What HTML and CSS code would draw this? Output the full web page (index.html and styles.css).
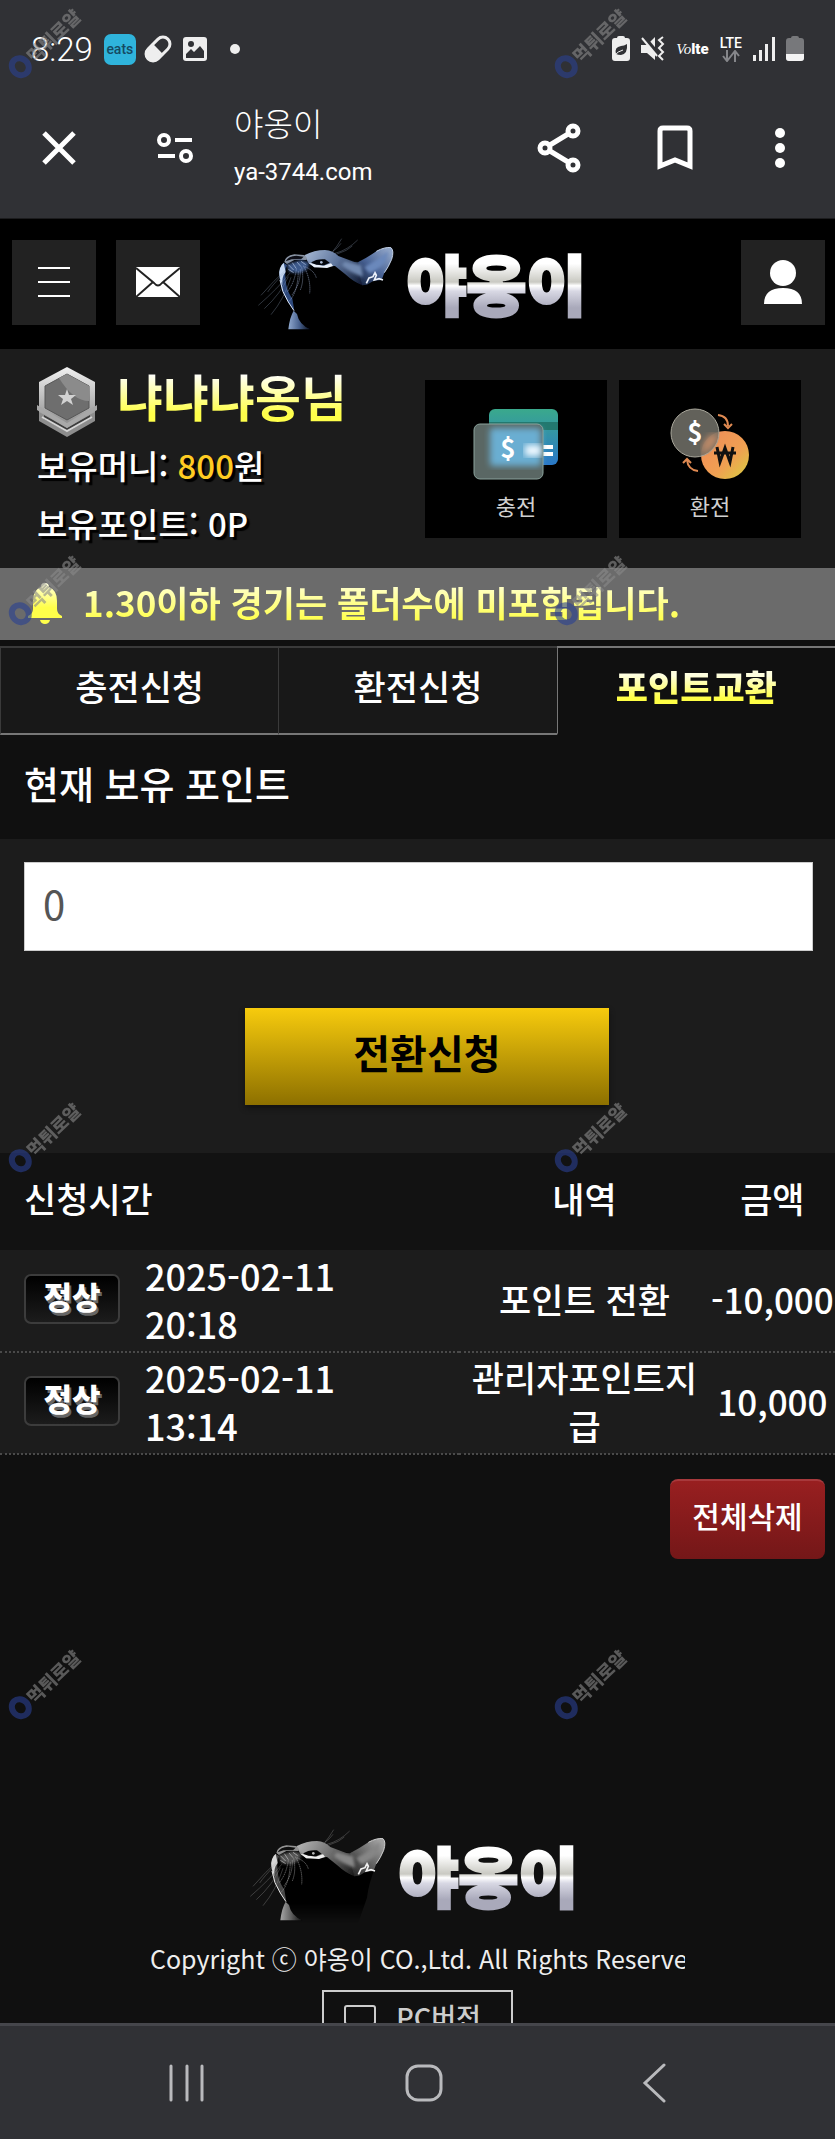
FILE: index.html
```html
<!DOCTYPE html>
<html lang="ko">
<head>
    <meta charset="UTF-8">
    <meta name="viewport" content="width=device-width, initial-scale=1.0">
    <title>야옹이</title>
    <link rel="stylesheet" href="styles.css">
</head>
<body>
    <!-- shared drawings -->
    <svg class="defs" width="0" height="0" aria-hidden="true">
        <defs>
            <linearGradient id="back" gradientUnits="userSpaceOnUse" x1="160" y1="60" x2="330" y2="170">
                <stop offset="0" stop-color="#a9bbd6"/>
                <stop offset=".5" stop-color="#5d749c"/>
                <stop offset="1" stop-color="#0e1830"/>
            </linearGradient>
            <linearGradient id="ear" gradientUnits="userSpaceOnUse" x1="410" y1="60" x2="320" y2="160">
                <stop offset="0" stop-color="#8ea3c6"/>
                <stop offset=".5" stop-color="#4a6496"/>
                <stop offset="1" stop-color="#16233f"/>
            </linearGradient>
            <linearGradient id="shade" x1="0" y1="0" x2="0" y2="1">
                <stop offset=".75" stop-color="#000"/>
                <stop offset="1" stop-color="#000" stop-opacity="0"/>
            </linearGradient>
            <linearGradient id="neck" x1="0" y1="0" x2="1" y2="0">
                <stop offset="0" stop-color="#8fa9cf"/>
                <stop offset=".5" stop-color="#48618e"/>
                <stop offset="1" stop-color="#060b16"/>
            </linearGradient>
            <linearGradient id="steel" x1="0" y1="0" x2="0" y2="1">
                <stop offset="0" stop-color="#f2f2f2"/>
                <stop offset="1" stop-color="#8a8a8a"/>
            </linearGradient>
            <linearGradient id="card" x1="0" y1="0" x2="0" y2="1">
                <stop offset="0" stop-color="#3aa98c"/>
                <stop offset="1" stop-color="#2a78c8"/>
            </linearGradient>
            <linearGradient id="coin" x1="0" y1="0" x2="1" y2="1">
                <stop offset="0" stop-color="#f08a5a"/>
                <stop offset=".6" stop-color="#f0a052"/>
                <stop offset="1" stop-color="#d8d040"/>
            </linearGradient>
            <linearGradient id="gold" x1="0" y1="0" x2="0" y2="1">
                <stop offset="0" stop-color="#ffffe0"/>
                <stop offset=".6" stop-color="#ffff4a"/>
            </linearGradient>
            <filter id="fine"><feGaussianBlur stdDeviation="1"/></filter>
            <filter id="soft"><feGaussianBlur stdDeviation="5"/></filter>
            <filter id="glow"><feGaussianBlur stdDeviation="3"/></filter>
        </defs>
        <symbol id="cat" viewBox="0 0 450 315">
            <path d="M100 92L160 76 220 62 280 86 340 100 400 130Q376 190 372 230L345 308H112L130 240 90 175 86 115Z" fill="url(#shade)"/>
            <g filter="url(#fine)">
                <path d="M160 76Q190 60 222 60 246 62 262 78L300 92Q318 100 330 94L362 120 350 160 334 166Q308 156 282 132L252 108 190 112 172 98Z" fill="url(#back)"/>
                <path d="M322 96Q350 82 376 64 402 50 420 53 430 62 422 88 412 112 400 128L392 150 368 152 348 164 334 166Q322 130 322 96Z" fill="url(#ear)"/>
                <path d="M376 64Q402 50 420 53 430 62 422 88 412 112 400 128" fill="none" stroke="#c4d2e8" stroke-width="3"/>
                <path d="M346 160L354 144 366 140 372 128 376 136 370 150 384 146 396 150" fill="none" stroke="#eef3fb" stroke-width="5"/>
                <path d="M100 96Q102 78 130 73L158 75Q172 82 166 90L130 90 108 102Z" fill="#8b95a5"/>
                <path d="M104 94Q112 78 136 77L158 80 150 88 122 88Z" fill="#0b0f18"/>
                <path d="M98 98Q82 116 86 146 92 186 112 216L130 242 124 206Q106 182 104 150 100 120 108 106Z" fill="#2e4a7c"/>
                <path d="M98 98Q82 112 85 136 87 152 94 166 92 140 104 126Z" fill="#c7d9f2"/>
                <path d="M87 150Q92 186 112 216L129 242" fill="none" stroke="#dfeaff" stroke-width="3"/>
                <path d="M128 242L138 252Q144 284 178 298H112Q116 262 128 242Z" fill="url(#neck)"/>
            </g>
            <path d="M106 104L150 90 176 98 168 118 146 130 116 126Z" fill="#3d5a8c" filter="url(#soft)"/>
            <path d="M280 94Q310 100 330 106L336 140Q300 130 272 106Z" fill="#7189b0" filter="url(#soft)"/>
            <path d="M340 112Q380 90 412 64L404 94Q388 116 356 130Z" fill="#6b88bb" filter="url(#soft)"/>
            <path d="M172 98L192 102 216 108 240 100 246 108 228 114 190 112Z" fill="#e8effa" filter="url(#fine)"/>
            <path d="M180 98Q196 86 222 88L236 98 220 106 196 104Z" fill="#03060c"/>
            <circle cx="211" cy="97" r="4" fill="#a8b8d2"/>
            <g fill="none" stroke="#93a3bd" stroke-width="1.2" opacity=".8">
                <path d="M116 130Q80 176 22 226M112 140Q90 190 40 236M120 142Q100 206 60 254M104 120Q70 150 30 196M100 128Q60 170 50 186"/>
                <path d="M244 66Q258 50 272 26M252 70Q290 60 320 30M246 64Q262 52 270 40M258 72Q290 62 304 48"/>
            </g>
            <g fill="none" stroke="#a9badb" stroke-width="1.6" stroke-dasharray="4 2">
                <path d="M148 118Q150 160 122 196M136 118Q130 160 108 186M152 112Q160 150 148 180M156 108Q190 120 196 144M142 124Q140 190 112 216M160 112Q180 150 176 190"/>
            </g>
            <path d="M112 104L128 120M124 98L136 116M138 96L150 110M112 118L128 128M150 94L164 104" stroke="#b5c7e4" stroke-width="2"/>
        </symbol>
    </svg>

    <div class="status-bar">
        <span class="clock">8:29</span>
        <span class="eats">eats</span>
        <svg class="pill" width="30" height="30" viewBox="0 0 30 30">
            <g transform="rotate(45 15 15)">
                <rect x="8" y="1" width="14" height="28" rx="7" fill="none" stroke="#eee" stroke-width="3"/>
                <path d="M7 15H23V22A8 8 0 0 1 7 22Z" fill="#eee"/>
            </g>
        </svg>
        <svg width="24" height="24" viewBox="0 0 24 24">
            <rect width="24" height="24" rx="3" fill="#eee"/>
            <circle cx="8" cy="7" r="3" fill="#303135"/>
            <path d="M3 21V17L8 12 11 15 17 9 21 14V21Z" fill="#303135"/>
        </svg>
        <span class="dot"></span>
        <div class="status-right">
            <svg width="18" height="26" viewBox="0 0 18 26">
                <path d="M5 2Q5 0 7 0H11Q13 0 13 2H15Q18 2 18 5V22Q18 25 15 25H3Q0 25 0 22V5Q0 2 3 2Z" fill="#eee"/>
                <path d="M4 18Q2 11 9 10 12 10 15 8 16 18 9 19 6 19 4 18Z" fill="#303135"/>
                <path d="M2 20Q6 15 11 14" stroke="#eee" stroke-width="1" fill="none"/>
            </svg>
            <svg width="24" height="26" viewBox="0 0 24 26">
                <path d="M0 9H6L14 1V24L6 17H0Z" fill="#eee"/>
                <path d="M2 0L18 19" stroke="#303135" stroke-width="4"/>
                <path d="M1 2L16 20" stroke="#eee" stroke-width="2"/>
                <path d="M22 1L18 4 22 8 18 12 22 16 18 20 22 24" stroke="#eee" stroke-width="2" fill="none"/>
            </svg>
            <span class="volte"><i>Vo</i><b>lte</b></span>
            <span class="lte">LTE
                <svg width="18" height="12" viewBox="0 0 18 12" fill="none" stroke="#85868a" stroke-width="2">
                    <path d="M5 0V10M1 6L5 11 9 6M13 12V2M9 6L13 1 17 6"/>
                </svg>
            </span>
            <svg width="22" height="24" viewBox="0 0 22 24" fill="#eee">
                <path d="M0 18H3V24H0ZM6 13H9V24H6ZM12 7H15V24H12ZM19 0H22V24H19Z"/>
            </svg>
            <svg width="18" height="26" viewBox="0 0 18 26">
                <path d="M5 2Q5 0 7 0H11Q13 0 13 2H15Q18 2 18 5V22Q18 25 15 25H3Q0 25 0 22V5Q0 2 3 2Z" fill="#77787b"/>
                <path d="M0 18H18V22Q18 25 15 25H3Q0 25 0 22Z" fill="#f4f4f4"/>
            </svg>
        </div>
    </div>

    <div class="toolbar">
        <button aria-label="닫기">
            <svg width="34" height="34" viewBox="0 0 34 34"><path d="M2 2L32 32M32 2L2 32" stroke="#fff" stroke-width="5"/></svg>
        </button>
        <button class="tune" aria-label="사이트 정보">
            <svg width="36" height="32" viewBox="0 0 36 32" fill="none" stroke="#fff" stroke-width="4">
                <circle cx="7" cy="8" r="5"/><circle cx="29" cy="24" r="5"/><path d="M18 8H35M1 24H18"/>
            </svg>
        </button>
        <div class="page-name">
            <span class="page-title">야옹이</span>
            <span class="page-domain">ya-3744.com</span>
        </div>
        <button aria-label="공유">
            <svg width="44" height="50" viewBox="0 0 44 50" fill="none" stroke="#fff" stroke-width="5">
                <path d="M8 25L36 8M8 25L36 42"/>
                <g fill="#303135"><circle cx="8" cy="25" r="5"/><circle cx="36" cy="8" r="5"/><circle cx="36" cy="42" r="5"/></g>
            </svg>
        </button>
        <button class="bookmark" aria-label="북마크">
            <svg width="36" height="46" viewBox="0 0 36 46"><path d="M3 41V6Q3 3 6 3H30Q33 3 33 6V41L18 35Z" fill="none" stroke="#fff" stroke-width="5"/></svg>
        </button>
        <button class="more" aria-label="더보기">
            <svg width="12" height="40" viewBox="0 0 12 40" fill="#fff"><circle cx="6" cy="5" r="5"/><circle cx="6" cy="20" r="5"/><circle cx="6" cy="35" r="5"/></svg>
        </button>
    </div>

    <div class="page">
        <header class="site-header">
            <div class="header-buttons">
                <button class="square" aria-label="메뉴">
                    <svg width="32" height="34" viewBox="0 0 32 34"><path d="M0 3H32M0 17H32M0 31H32" stroke="#fff" stroke-width="2"/></svg>
                </button>
                <button class="square" aria-label="쪽지">
                    <svg width="44" height="30" viewBox="0 0 44 30">
                        <rect width="44" height="30" rx="1" fill="#fff"/>
                        <path d="M0 1L18 16Q22 21 26 16L44 1M0 30L17 15M44 30L27 15" fill="none" stroke="#222" stroke-width="2"/>
                    </svg>
                </button>
            </div>
            <a class="logo" href="#">
                <svg class="cat" width="150" height="105"><use href="#cat"/></svg>
                <span class="logo-text">야옹이</span>
            </a>
            <button class="square user" aria-label="내 정보">
                <svg width="40" height="46" viewBox="0 0 40 46" fill="#fff"><circle cx="20" cy="14" r="13"/><path d="M1 45Q1 29 20 29T39 45Z"/></svg>
            </button>
        </header>

        <section class="member">
            <div class="member-info">
                <div class="member-name">
                    <svg width="60" height="70" viewBox="0 0 60 70">
                        <path d="M2 42L30 58 58 42V54L30 70 2 54Z" fill="#8d8d8d"/>
                        <path d="M7 48L30 61 53 48V52L30 65 7 52Z" fill="#3c3c3c"/>
                        <path d="M5 50L30 64 55 50" fill="none" stroke="#d5d5d5" stroke-width="2"/>
                        <path d="M30 0L58 15V45L30 60 2 45V15Z" fill="url(#steel)"/>
                        <path d="M30 7L52 19V41L30 53 8 41V19Z" fill="#6e6e6e" stroke="#565656"/>
                        <path d="M30 7L52 19V34Q36 34 22 11Z" fill="#8b8b8b"/>
                        <path d="M30 22L32 28H39L34 32 36 38 30 34 24 38 26 32 21 28H28Z" fill="#d2d2d2"/>
                        <path d="M0 38L30 56 60 38V43L30 61 0 43Z" fill="#a8a8a8"/>
                    </svg>
                    <strong>냐냐냐옹님</strong>
                </div>
                <p>보유머니: <em>800</em>원</p>
                <p>보유포인트: 0P</p>
            </div>
            <div class="member-links">
                <a class="money-link" href="#">
                    <svg width="86" height="72" viewBox="0 0 86 72">
                        <rect x="16" y="1" width="69" height="56" rx="6" fill="url(#card)"/>
                        <path d="M16 14H85V22H16Z" fill="#23786f"/>
                        <path d="M60 39H80M60 46H80" stroke="#fff" stroke-width="4"/>
                        <rect x="1" y="16" width="69" height="55" rx="6" fill="#5a6764"/>
                        <rect x="17" y="20" width="51" height="38" rx="3" fill="#6aaed2" filter="url(#glow)"/>
                        <rect x="52" y="37" width="16" height="11" fill="#eef8ff" filter="url(#glow)"/>
                        <rect x="1" y="16" width="69" height="55" rx="6" fill="none" stroke="#8ba39c"/>
                        <text x="35" y="50" text-anchor="middle" class="coin-sign">$</text>
                    </svg>
                    <span>충전</span>
                </a>
                <a class="money-link" href="#">
                    <svg width="80" height="72" viewBox="0 0 80 72">
                        <circle cx="55" cy="47" r="24" fill="url(#coin)"/>
                        <circle cx="25" cy="25" r="24" fill="#6d6b64" fill-opacity=".9" stroke="#aaa89c"/>
                        <path d="M33 37Q40 22 48 28 44 40 32 46Z" fill="#c28b68" filter="url(#glow)"/>
                        <text x="25" y="34" text-anchor="middle" class="coin-sign">$</text>
                        <path d="M47 39L50 54 55 40 60 54 63 39M44 45H66" fill="none" stroke="#111" stroke-width="3"/>
                        <path d="M48 7Q58 8 58 18M54 16L58 20 62 16M28 63Q18 62 17 52M13 55L17 51 21 55" fill="none" stroke="#e08a52" stroke-width="2"/>
                    </svg>
                    <span>환전</span>
                </a>
            </div>
        </section>

        <div class="notice">
            <svg width="34" height="42" viewBox="0 0 34 42" fill="url(#gold)">
                <path d="M17 0Q21 0 21 4 29 7 29 18V26Q29 31 34 33V35H0V33Q5 31 5 26V18Q5 7 13 4 13 0 17 0ZM12 37H22Q21 41 17 41T12 37Z"/>
            </svg>
            <span>1.30이하 경기는 폴더수에 미포함됩니다.</span>
        </div>

        <nav class="tabs">
            <a href="#">충전신청</a>
            <a href="#">환전신청</a>
            <a class="active" href="#"><span>포인트교환</span></a>
        </nav>

        <form class="exchange">
            <label for="point">현재 보유 포인트</label>
            <div class="exchange-body">
                <input type="text" id="point" value="0">
                <button type="button">전환신청</button>
            </div>
        </form>

        <table class="history">
            <thead>
                <tr>
                    <th class="col-time">신청시간</th>
                    <th class="col-desc">내역</th>
                    <th class="col-amount">금액</th>
                </tr>
            </thead>
            <tbody>
                <tr>
                    <td><div class="time"><span class="state">정상</span><span class="date">2025-02-11 20:18</span></div></td>
                    <td>포인트 전환</td>
                    <td class="amount">-10,000</td>
                </tr>
                <tr>
                    <td><div class="time"><span class="state">정상</span><span class="date">2025-02-11 13:14</span></div></td>
                    <td>관리자포인트지급</td>
                    <td class="amount">10,000</td>
                </tr>
            </tbody>
        </table>
        <div class="history-actions">
            <button type="button">전체삭제</button>
        </div>

        <footer class="site-footer">
            <a class="logo" href="#">
                <svg class="cat" width="150" height="105"><use href="#cat"/></svg>
                <span class="logo-text">야옹이</span>
            </a>
            <p>Copyright ⓒ 야옹이 CO.,Ltd. All Rights Reserved.</p>
            <a class="pc-version" href="#">
                <svg width="32" height="24" viewBox="0 0 32 24" fill="none" stroke="#ccc" stroke-width="2"><rect x="1" y="1" width="30" height="18" rx="2"/><path d="M10 23H22"/></svg>
                PC버전
            </a>
        </footer>
    </div>

    <div class="phone-nav">
        <button aria-label="최근 앱"><svg width="36" height="38" viewBox="0 0 36 38"><path d="M2 2V36M18 2V36M33 2V36" stroke="#b9babd" stroke-width="3" stroke-linecap="round"/></svg></button>
        <button aria-label="홈"><svg width="38" height="38" viewBox="0 0 38 38"><rect x="2" y="2" width="34" height="34" rx="11" fill="none" stroke="#b9babd" stroke-width="3"/></svg></button>
        <button aria-label="뒤로"><svg width="24" height="40" viewBox="0 0 24 40"><path d="M22 2L3 20 22 38" fill="none" stroke="#b9babd" stroke-width="3" stroke-linecap="round"/></svg></button>
    </div>

    <!-- repeated overlay marks -->
    <div class="marks">
        <div class="mark"><i></i><span>먹튀로얄</span></div>
        <div class="mark"><i></i><span>먹튀로얄</span></div>
        <div class="mark"><i></i><span>먹튀로얄</span></div>
        <div class="mark"><i></i><span>먹튀로얄</span></div>
        <div class="mark"><i></i><span>먹튀로얄</span></div>
        <div class="mark"><i></i><span>먹튀로얄</span></div>
        <div class="mark"><i></i><span>먹튀로얄</span></div>
        <div class="mark"><i></i><span>먹튀로얄</span></div>
    </div>
</body>
</html>
```
FILE: styles.css
```css
* {
    box-sizing: border-box;
}
body {
    position: relative;
    display: flex;
    flex-direction: column;
    height: 100vh;
    margin: 0;
    overflow: hidden;
    background-color: #101010;
    color: #fff;
    font-family: "Noto Sans CJK KR", sans-serif;
    font-weight: 500;
}
a {
    color: inherit;
    text-decoration: none;
}
p {
    margin: 0;
}
button {
    padding: 0;
    border: none;
    background: none;
    color: inherit;
    font-family: inherit;
    cursor: pointer;
}
svg {
    display: block;
    flex-shrink: 0;
}
.defs {
    position: absolute;
}

/* phone status bar and browser toolbar */
.status-bar {
    display: flex;
    align-items: center;
    flex-shrink: 0;
    height: 80px;
    padding: 18px 31px 0;
    background-color: #303135;
    font-family: Roboto, sans-serif;
}
.clock {
    font-size: 33px;
    font-weight: 300;
}
.eats {
    width: 32px;
    margin: 0 7px 0 11px;
    border-radius: 7px;
    background-color: #2fb4dc;
    color: #154a63;
    font-size: 14px;
    line-height: 31px;
    text-align: center;
}
.pill {
    margin-right: 10px;
}
.dot {
    width: 10px;
    height: 10px;
    margin-left: 23px;
    border-radius: 50%;
    background-color: #eee;
}
.status-right {
    display: flex;
    align-items: center;
    gap: 11px;
    margin-left: auto;
}
.volte {
    font-size: 15px;
    line-height: 24px;
}
.volte i {
    font-family: "Liberation Serif", serif;
    font-weight: 400;
}
.volte b {
    font-weight: 900;
}
.lte {
    display: flex;
    flex-direction: column;
    align-items: center;
    font-size: 14px;
    line-height: 14px;
}
.toolbar {
    display: flex;
    align-items: center;
    flex-shrink: 0;
    height: 139px;
    padding: 0 49px 3px 42px;
    border-bottom: 1px solid #1c1c1e;
    background-color: #303135;
}
.tune {
    margin: 0 41px 0 81px;
}
.page-name {
    display: flex;
    flex-direction: column;
    flex: 1;
}
.page-title {
    font-size: 32px;
    font-weight: 300;
    line-height: 48px;
}
.page-domain {
    font-family: Roboto, sans-serif;
    font-size: 24px;
    font-weight: 400;
    line-height: 52px;
}
.bookmark {
    margin: 0 81px 0 76px;
}

/* site header */
.page {
    flex: 1;
    min-height: 0;
    overflow: hidden;
}
.site-header {
    display: grid;
    grid-template-columns: 1fr auto 1fr;
    align-items: center;
    height: 130px;
    padding: 0 10px 4px 12px;
    background-color: #000;
}
.header-buttons {
    display: flex;
    gap: 20px;
}
.square {
    display: flex;
    align-items: center;
    justify-content: center;
    width: 84px;
    height: 85px;
    background-color: #222;
}
.user {
    justify-self: end;
}
.logo {
    display: flex;
    align-items: center;
    gap: 6px;
}
.logo-text {
    background: linear-gradient(#fff 30%, #c9c9c2 50%, #fff 54%, #d8d8e4 60%, #a9a9ba 78%);
    -webkit-background-clip: text;
    background-clip: text;
    -webkit-text-stroke: 3px transparent;
    color: transparent;
    font-size: 65px;
    font-weight: 900;
    line-height: 92px;
}

/* member box */
.member {
    display: flex;
    justify-content: space-between;
    padding: 10px 34px 16px 37px;
    background-color: #1c1c1c;
}
.member-name {
    display: flex;
    align-items: flex-start;
    gap: 20px;
    height: 77px;
}
.member-name svg {
    margin-top: 8px;
}
.member-name strong {
    background: linear-gradient(#fff 20%, #ffff4a 75%);
    -webkit-background-clip: text;
    background-clip: text;
    color: transparent;
    font-size: 50px;
    font-weight: 700;
    line-height: 72px;
}
.member-info p {
    font-size: 33px;
    line-height: 58px;
    text-shadow: 3px 3px 1px #000;
}
.member-info em {
    color: #fc2;
    font-style: normal;
}
.member-links {
    display: flex;
    gap: 12px;
    padding-top: 21px;
}
.money-link {
    display: flex;
    flex-direction: column;
    align-items: center;
    gap: 10px;
    width: 182px;
    height: 158px;
    padding-top: 28px;
    background-color: #000;
    color: #d0d0d0;
    font-size: 22px;
    font-weight: 400;
    line-height: 30px;
}
.coin-sign {
    fill: #fff;
    font-size: 26px;
    font-weight: 700;
}

/* notice */
.notice {
    display: flex;
    align-items: center;
    gap: 21px;
    height: 72px;
    padding-left: 28px;
    background-color: #6b6b6b;
    white-space: nowrap;
}
.notice span {
    padding-bottom: 4px;
    background: linear-gradient(#ffffd8 20%, #ffff45 75%);
    -webkit-background-clip: text;
    background-clip: text;
    color: transparent;
    font-size: 35px;
    font-weight: 700;
    line-height: 68px;
}

/* tabs */
.tabs {
    display: grid;
    grid-template-columns: 1fr 1fr 1fr;
    margin-top: 6px;
}
.tabs a {
    height: 89px;
    border: solid #3a3a3a;
    border-width: 2px 0 2px 1px;
    border-bottom-color: #777;
    background-color: #181818;
    font-size: 35px;
    line-height: 76px;
    text-align: center;
}
.tabs .active {
    border-color: #777;
    border-bottom-color: transparent;
    background-color: #101010;
    font-weight: 900;
}
.active span {
    background: linear-gradient(#ffffe0 30%, #ffff45 75%);
    -webkit-background-clip: text;
    background-clip: text;
    color: transparent;
}

/* point exchange form */
.exchange label {
    display: block;
    padding: 0 24px 8px;
    font-size: 38px;
    line-height: 96px;
}
.exchange-body {
    padding: 23px 22px 48px 24px;
    background-color: #1c1c1c;
}
.exchange input {
    display: block;
    width: 100%;
    height: 89px;
    padding: 0 18px 8px;
    border: 1px solid #ccc;
    border-radius: 0;
    background-color: #fff;
    color: #555;
    font-family: inherit;
    font-size: 40px;
}
.exchange button {
    display: block;
    width: 364px;
    height: 97px;
    margin: 57px 0 0 28%;
    padding-bottom: 10px;
    background: linear-gradient(#f7cb0d, #8d7000);
    box-shadow: 0 3px 5px #111;
    color: #000;
    font-size: 40px;
    font-weight: 700;
}

/* history */
.history {
    width: 100%;
    border-collapse: collapse;
    table-layout: fixed;
}
.history th {
    height: 97px;
    padding: 0 0 8px;
    background-color: #121212;
    font-size: 35px;
    font-weight: 500;
    line-height: 48px;
}
.history .col-time {
    width: 55%;
    padding-left: 24px;
    text-align: left;
}
.col-desc {
    width: 30%;
}
.col-amount {
    width: 15%;
}
.history td {
    height: 102px;
    padding: 0 0 4px;
    border-bottom: 2px dotted #4a4a4a;
    background-color: #1c1c1c;
    font-size: 35px;
    line-height: 48px;
    text-align: center;
    word-break: break-all;
}
.history .amount {
    white-space: nowrap;
    word-break: normal;
}
.time {
    display: flex;
    align-items: center;
    gap: 25px;
    padding-left: 24px;
    text-align: left;
}
.state {
    flex-shrink: 0;
    width: 96px;
    height: 50px;
    border: 2px solid #3c3c3c;
    border-radius: 7px;
    background: linear-gradient(#000, #1c1c1c);
    font-size: 31px;
    font-weight: 900;
    line-height: 40px;
    text-align: center;
    text-shadow: 2px 3px 0 #666;
}
.date {
    width: 200px;
    font-size: 36px;
    word-break: normal;
}
.history-actions {
    display: flex;
    justify-content: flex-end;
    padding: 24px 10px 0;
}
.history-actions button {
    width: 155px;
    height: 80px;
    padding-bottom: 10px;
    border-top: 2px solid #a8393c;
    border-radius: 8px;
    background: linear-gradient(#981f20, #741718);
    font-size: 30px;
    font-weight: 500;
}

/* footer */
.site-footer {
    display: flex;
    flex-direction: column;
    align-items: center;
    padding-top: 262px;
}
.site-footer .logo {
    padding-right: 14px;
}
.site-footer .cat {
    filter: grayscale(1);
}
.site-footer p {
    width: 535px;
    overflow: hidden;
    color: #eee;
    font-size: 25px;
    font-weight: 400;
    line-height: 64px;
    white-space: nowrap;
}
.pc-version {
    display: flex;
    align-items: center;
    gap: 20px;
    height: 54px;
    padding: 0 30px 0 20px;
    border: 2px solid #ccc;
    color: #ccc;
    font-size: 27px;
    line-height: 40px;
}
.phone-nav {
    display: flex;
    align-items: center;
    justify-content: space-between;
    flex-shrink: 0;
    height: 116px;
    padding: 0 169px;
    border-top: 3px solid #45464b;
    background-color: #303135;
}

/* overlay marks, repeated over everything */
.marks {
    position: absolute;
    inset: 0;
    display: grid;
    grid-template-columns: 546px 1fr;
    grid-auto-rows: 547px;
    overflow: hidden;
    opacity: .6;
    pointer-events: none;
}
.mark {
    display: flex;
    align-items: center;
    gap: 1px;
    width: 100px;
    height: 24px;
    margin: 54px 0 0 9px;
    transform: rotate(-44deg);
    transform-origin: 12px 12px;
    color: #8a8a8a;
    font-size: 18px;
    font-weight: 900;
    white-space: nowrap;
}
.mark i {
    width: 22px;
    height: 24px;
    border: 6px solid #2a4092;
    border-radius: 50%;
}
```
